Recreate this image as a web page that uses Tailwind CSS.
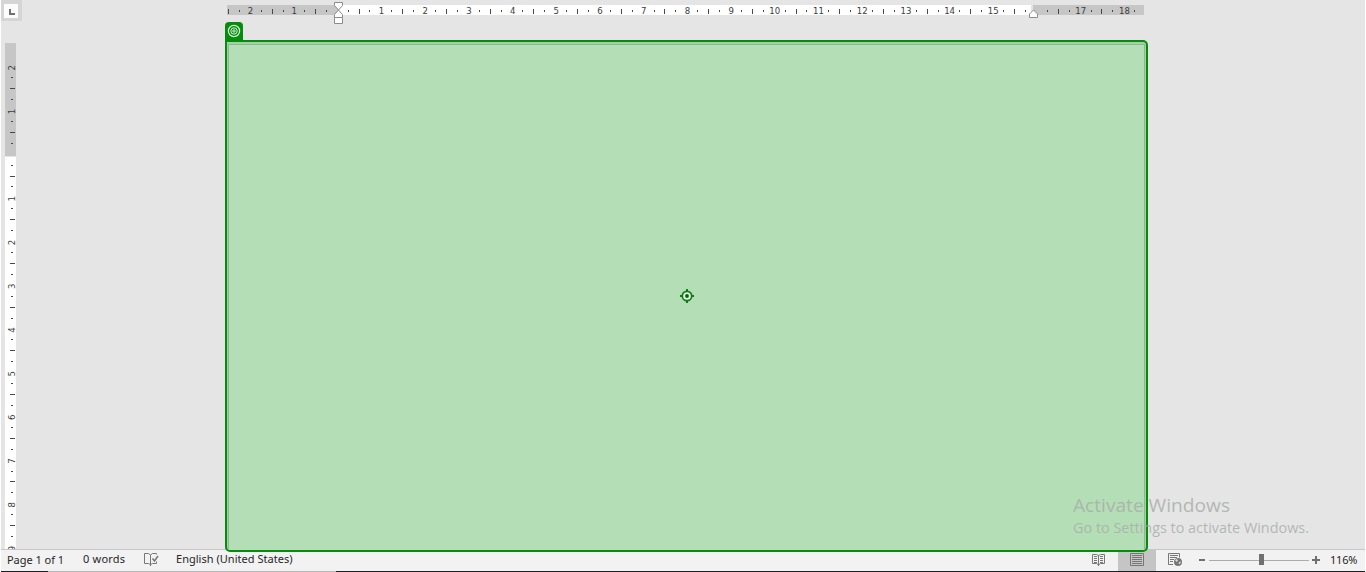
<!DOCTYPE html>
<html lang="en">
<head>
<meta charset="utf-8">
<title>Document</title>
<script src="https://cdn.jsdelivr.net/npm/@tailwindcss/browser@4"></script>
</head>
<body class="h-[572px] w-[1366px] overflow-hidden bg-white font-['Noto_Sans','Open_Sans',sans-serif]">
<div class="relative flex h-[572px] flex-col px-px">
  <main class="flex h-[549px] bg-[#e5e5e5]">
    <aside class="flex w-[21px] flex-col">
      <div class="flex h-[21px] items-center justify-center bg-[#d5d5d5]">
        <div class="mr-px flex h-[14px] w-[14px] items-center justify-center bg-[#fcfcfc]">
          <svg width="14" height="14" shape-rendering="crispEdges"><path d="M5 5h2v4h4v2H5z" fill="#707070"/></svg>
        </div>
      </div>
      <svg id="vr" class="block" width="21" height="528" viewBox="1 21 21 528">
        <g shape-rendering="crispEdges"><path fill="#c6c6c6" d="M5 43h11v113H5z"/><path fill="#fff" d="M5 157h11v392H5z"/></g>
      </svg>
    </aside>
    <svg id="hr" class="ml-[203px] block" width="922" height="28" viewBox="225 0 922 28">
      <g shape-rendering="crispEdges"><path fill="#c6c6c6" d="M227 5h111v10H227zM1033 5h111v10H1033z"/><path fill="#fff" d="M338 5h693v10H338z"/></g>
      <g id="hm"></g>
      <g fill="#fff" stroke="#8c8c8c">
        <path d="M334.500 2.500h8v3l-4 4.500-4-4.500z"/>
        <path d="M334.500 17.500v-3l4-4.500 4 4.500v3z"/>
        <path d="M334.500 17.500h8v6h-8z"/>
        <path d="M1029.500 17.500v-3.500l4-4 4 4v3.500z"/>
      </g>
    </svg>
  </main>
  <footer class="flex h-[23px] border-t border-[#c6c6c6] bg-[#f2f2f2] text-[#262626]">
    <svg class="block shrink-0" viewBox="1 550 1364 22" width="1364" height="22">
      <path fill="#c5c5c5" d="M1118 550h38v21h-38z"/>
      <g font-family="Noto Sans, Open Sans, sans-serif" font-size="11" fill="#262626">
        <text x="7" y="564" textLength="57">Page 1 of 1</text>
        <text x="83" y="563" textLength="42">0 words</text>
        <text x="176" y="563" textLength="116.500">English (United States)</text>
        <text x="1330" y="564" textLength="27.500">116%</text>
      </g>
      <g fill="none" stroke="#777">
        <path d="M150.500 564.500l-2-1h-4v-10h4l2 1.500v11M150.500 555l2-1.500h4v1M150.500 564.500l2-1h4v-2"/>
        <path d="M152.500 558.500l2 2.500 3.500-5" stroke-width="1.500"/>
        <path d="M1092.500 554.500h4l2 1 2-1h4v9h-4l-2 1.500-2-1.500h-4zM1098.500 555v11M1094 556.500h3M1094 558.500h3M1094 560.500h3M1094 562.500h3M1100 556.500h3M1100 558.500h3M1100 560.500h3M1100 562.500h3"/>
        <path d="M1130.500 553.500h13v12h-13zM1132 555.500h10M1132 557.500h10M1132 559.500h10M1132 561.500h10M1132 563.500h10"/>
        <path d="M1173 564.500h-4.500v-11h11v4M1170 555.500h8M1170 557.500h7M1170 559.500h4M1170 561.500h3"/>
      </g>
      <circle cx="1178" cy="562" r="4" fill="#777"/>
      <path d="M1175 560l2-1 1 1.500-1.500 1.500zM1179 562l2-.5-1 2.500-1.500-.5z" fill="#ddd"/>
      <g shape-rendering="crispEdges"><path fill="#ababab" d="M1209 560h100v1h-100z"/>
      <path fill="#707070" d="M1199 559h6v2h-6zM1259 554h5v11h-5zM1312 559h8v2h-8zM1315 556h2v8h-2z"/>
      <path fill="#1d1d22" d="M1 571h47v1H1zM336 571h1029v1H336z"/><path fill="#b8b8b8" d="M48 571h288v1H48z"/></g>
    </svg>
  </footer>

  <!-- selected page region -->
  <div class="absolute left-[225px] top-[22px] flex h-[20px] w-[18px] items-center justify-center rounded-t-[4px] bg-[#048d0c]">
    <svg width="18" height="20" fill="none" stroke="#d9f2da"><circle cx="9" cy="9" r="5.600" stroke-width="1.200"/><circle cx="9" cy="9" r="3.200"/><circle cx="9" cy="9" r="1.200"/></svg>
  </div>
  <div class="absolute left-[225px] top-[40px] h-[512px] w-[923px] rounded-[5px] rounded-tl-none border-2 border-[#048d0c] bg-[#a4d0a6] px-px pt-[2px]">
    <div class="flex h-full items-center justify-center border border-b-0 border-[#8db990] bg-[#b4deb6] pb-[3px]">
      <svg width="14" height="14" viewBox="680 289 14 14" fill="none" stroke="#0b7d12"><circle cx="687" cy="296" r="4.700" fill="#e4f5e4" stroke-width="1.700"/><circle cx="687" cy="296" r="1.900" fill="#075f0c" stroke="none"/><path stroke-width="2" d="M687 289v2.500M687 300.500v2.500M680 296h2.500M691.500 296h2.500"/></svg>
    </div>
  </div>
  <svg class="absolute left-[1060px] top-[490px]" width="260" height="52" viewBox="1060 490 260 52" font-family="Open Sans, Noto Sans, sans-serif" fill="#a9aeaa" fill-opacity=".85">
    <text x="1073" y="512" font-size="19" textLength="157" lengthAdjust="spacingAndGlyphs">Activate Windows</text>
    <text x="1073" y="533" font-size="14.500" textLength="236" lengthAdjust="spacingAndGlyphs">Go to Settings to activate Windows.</text>
  </svg>
</div>
<script>
const ns = 'http://www.w3.org/2000/svg';
function add(parent, name, attrs, text) {
  const el = document.createElementNS(ns, name);
  for (const k in attrs) el.setAttribute(k, attrs[k]);
  if (text) el.textContent = text;
  parent.appendChild(el);
}
const hm = document.getElementById('hm'), vr = document.getElementById('vr'), step = 43.7;
const label = {'font-family': 'DejaVu Sans Condensed, DejaVu Sans, sans-serif', 'font-stretch': 'condensed', 'font-size': 9.5, 'text-anchor': 'middle', fill: '#3c3c3c'};
for (let q = -10; q <= 73; q++) {
  if (q === 0 || q === 64) continue;
  const x = Math.floor((q < 0 ? 337.7 : 337.2) + q * step / 4), m = ((q % 4) + 4) % 4;
  if (m === 0) add(hm, 'text', {...label, x: 337.8 + q * step / 4, y: 14}, String(Math.abs(q / 4)));
  else add(hm, 'rect', {x, y: m === 2 ? 9 : 10, width: 1, height: m === 2 ? 5 : 2, fill: '#484848', 'shape-rendering': 'crispEdges'});
}
for (let q = -8; q <= 36; q++) {
  if (q === 0) continue;
  const y = Math.floor(154.2 + q * step / 4), m = ((q % 4) + 4) % 4;
  if (m === 0) add(vr, 'text', {...label, transform: `translate(15 ${155.2 + q * step / 4}) rotate(-90)`}, String(Math.abs(q / 4)));
  else add(vr, 'rect', {x: m === 2 ? 10 : 11, y, width: m === 2 ? 5 : 2, height: 1, fill: '#484848', 'shape-rendering': 'crispEdges'});
}
</script>
</body>
</html>
